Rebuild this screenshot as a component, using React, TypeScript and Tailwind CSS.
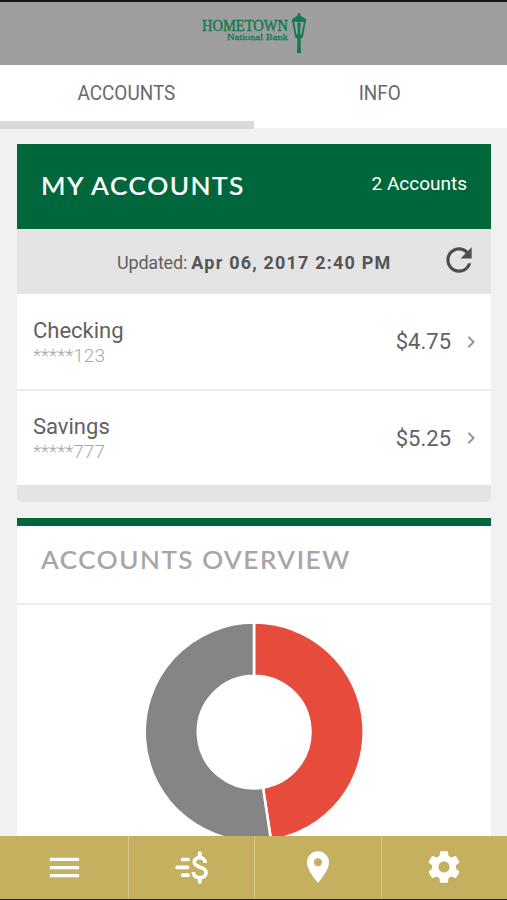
import { MdChevronRight, MdLocationOn, MdMenu, MdRefresh } from "react-icons/md";

const accounts = [
  { name: "Checking", mask: "*****", digits: "123", balance: "$4.75" },
  { name: "Savings", mask: "*****", digits: "777", balance: "$5.25" },
];

function Logo() {
  return (
    <svg width="110" height="46" viewBox="0 0 110 46" fill="#147a50" className="font-['Liberation_Serif',serif]">
      <text x="3" y="21.2" fontSize="15.8" stroke="#147a50" strokeWidth="0.45" textLength="86" lengthAdjust="spacingAndGlyphs">
        HOMETOWN
      </text>
      <text x="28" y="30.2" fontSize="9" stroke="#147a50" strokeWidth="0.3" textLength="61" lengthAdjust="spacingAndGlyphs">
        National Bank
      </text>
      <path d="M99.2 3h1.6l.5 2.2 4.6 3.3 1.6 1.2-.9 2.3H93.4l-.9-2.3 1.6-1.2 4.6-3.3z" />
      <path d="M94 11l2.8 14.5h6.4L106 11" fill="none" stroke="#147a50" strokeWidth="1.8" />
      <path d="M98.2 13.5q1.8-2.5 3.6 0l-.6 6v6h-2.4v-6z" />
      <path d="M96 24.8h8l-.6 3.4h-1.8l.4 14.8h-4l.4-14.8h-1.8z" />
    </svg>
  );
}

function TransferIcon() {
  return (
    <svg width="34" height="34" viewBox="0 0 34 34" fill="none" stroke="#fff" strokeLinecap="round">
      <path d="M8.6 9.5h5.4M3.2 17.4h10.3M8.6 25.2h5.4" strokeWidth="3.7" />
      <path d="M31.4 13C31.1 9.6 28.7 7.7 25.8 7.7c-3.3 0-5.5 1.7-5.5 4.4 0 6.6 11.8 3.6 11.8 10.4 0 3.2-2.6 5.2-6 5.2-4 0-6.6-2-6.8-5.7" strokeWidth="3.7" strokeLinecap="butt" />
      <path d="M25.8 3.2v4M25.8 27.8v4" strokeWidth="3.9" />
    </svg>
  );
}

function GearIcon() {
  return (
    <svg width="38" height="38" viewBox="0 0 24 24" fill="#fff">
      <path d="M19.43 12.98c.04-.32.07-.64.07-.98s-.03-.66-.07-.98l2.11-1.65c.19-.15.24-.42.12-.64l-2-3.46c-.12-.22-.39-.3-.61-.22l-2.49 1c-.52-.4-1.08-.73-1.69-.98l-.38-2.65C14.46 2.18 14.25 2 14 2h-4c-.25 0-.46.18-.49.42l-.38 2.65c-.61.25-1.17.59-1.69.98l-2.49-1c-.23-.09-.49 0-.61.22l-2 3.46c-.13.22-.07.49.12.64l2.11 1.65c-.04.32-.07.65-.07.98s.03.66.07.98l-2.11 1.65c-.19.15-.24.42-.12.64l2 3.46c.12.22.39.3.61.22l2.49-1c.52.4 1.08.73 1.69.98l.38 2.65c.03.24.24.42.49.42h4c.25 0 .46-.18.49-.42l.38-2.65c.61-.25 1.17-.59 1.69-.98l2.49 1c.23.09.49 0 .61-.22l2-3.46c.12-.22.07-.49-.12-.64l-2.11-1.65zM12 15.5c-1.93 0-3.5-1.57-3.5-3.5s1.57-3.5 3.5-3.5 3.5 1.57 3.5 3.5-1.57 3.5-3.5 3.5z" />
    </svg>
  );
}

function DonutChart() {
  return (
    <svg width="220" height="220" viewBox="-110 -110 220 220" className="shrink-0" stroke="#fff" strokeWidth="2.6">
      <path d="M0 -109.5A109.5 109.5 0 0 1 17 108.2L9 55.6A56.3 56.3 0 0 0 0 -56.3Z" fill="#e64b3b" />
      <path d="M17 108.2A109.5 109.5 0 1 1 0 -109.5L0 -56.3A56.3 56.3 0 1 0 9 55.6Z" fill="#858585" />
    </svg>
  );
}

export default function App() {
  return (
    <div className="flex h-[900px] w-[507px] flex-col overflow-hidden bg-[#f1f1f1] font-[Roboto,sans-serif] text-[#616161]">
      <header className="flex h-[65px] shrink-0 justify-center border-t-2 border-[#171717] bg-[#9e9e9e] pt-[8px]">
        <Logo />
      </header>

      <nav className="grid h-[63px] shrink-0 grid-cols-2 bg-white text-center text-[19.5px] text-[#6a6a6a]">
        <div className="border-b-8 border-[#d9d9d9] pt-[2px] leading-[54px]">
          <span className="inline-block origin-center scale-x-[0.97]">ACCOUNTS</span>
        </div>
        <div className="pr-px pt-[2px] leading-[54px]">
          <span className="inline-block origin-center scale-x-[0.97]">INFO</span>
        </div>
      </nav>

      <main className="flex min-h-0 flex-1 flex-col gap-4 overflow-hidden px-4 pt-4">
        <section className="ml-px shrink-0 overflow-hidden rounded-b-md">
          <div className="flex h-[85px] items-center justify-between bg-[#00663c] pl-[24px] pr-6 text-white">
            <h1 className="origin-left scale-x-[1.05] pb-[2px] font-[Lato,sans-serif] text-[25px] font-medium tracking-[1.4px] [-webkit-text-stroke:0.2px]">
              MY ACCOUNTS
            </h1>
            <span className="pb-1 text-[19px]">2 Accounts</span>
          </div>
          <div className="flex h-[65px] items-center justify-between bg-[#e4e4e4] pl-[100px] pr-[13px] text-[18px]">
            <p className="whitespace-nowrap pt-[2px] tracking-[-0.2px]">
              Updated: <b className="tracking-[1.2px] text-[#555]">Apr 06, 2017 2:40 PM</b>
            </p>
            <MdRefresh size={38} color="#4d4d4d" className="-mt-1" />
          </div>
          {accounts.map((account, i) => (
            <div
              key={account.name}
              className={`flex items-center justify-between bg-white pl-4 pr-[8px] ${i === 0 ? "h-[97px] border-b-2 border-[#ececec]" : "h-[94px]"}`}
            >
              <div className="pt-[2px]">
                <div className="text-[22px] leading-[26px]">{account.name}</div>
                <div className="text-[19px] font-light leading-6 text-[#a8a8a8]">
                  {account.mask}
                  {account.digits}
                </div>
              </div>
              <div className="flex items-center gap-2">
                <span className="text-[22px]">{account.balance}</span>
                <MdChevronRight size={24} color="#999" />
              </div>
            </div>
          ))}
          <div className="h-[17px] bg-[#e4e4e4]" />
        </section>

        <section className="ml-px flex-1 overflow-hidden border-t-8 border-[#00663c] bg-white">
          <div className="flex h-[79px] items-center border-b-2 border-[#ececec] pb-[9px] pl-[24px]">
            <h2 className="origin-left scale-x-[1.04] whitespace-nowrap font-[Lato,sans-serif] text-[25px] font-medium tracking-[1.5px] text-[#a6a6a6] [-webkit-text-stroke:0.2px]">
              ACCOUNTS OVERVIEW
            </h2>
          </div>
          <div className="flex justify-center pt-[17px]">
            <DonutChart />
          </div>
        </section>
      </main>

      <footer className="grid h-16 shrink-0 grid-cols-[129px_126px_127px_125px] border-b border-b-[#2a2005] bg-[#c4b05f]">
        <div className="flex items-center justify-center border-r border-[#d6c88b]">
          <MdMenu size={39} color="#fff" />
        </div>
        <div className="flex items-center justify-center border-r border-[#d6c88b] pb-px pr-[2px]">
          <TransferIcon />
        </div>
        <div className="flex items-center justify-center border-r border-[#d6c88b] pb-px">
          <MdLocationOn size={38} color="#fff" />
        </div>
        <div className="flex items-center justify-center pb-[2px] pr-px">
          <GearIcon />
        </div>
      </footer>
    </div>
  );
}
